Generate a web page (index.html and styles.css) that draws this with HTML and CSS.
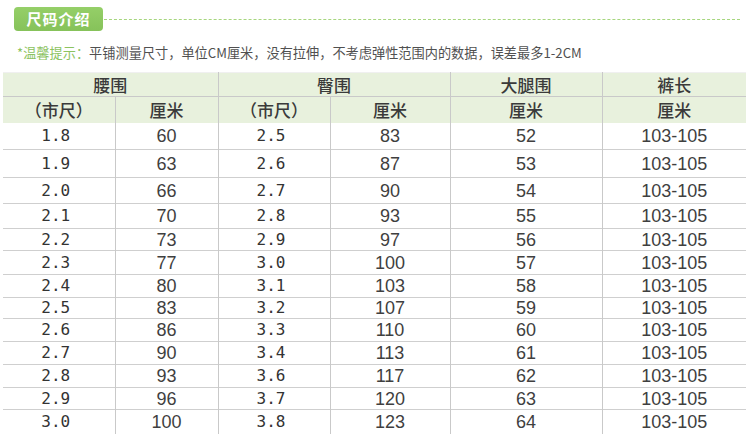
FILE: index.html
```html
<!DOCTYPE html>
<html lang="zh-CN">
<head>
<meta charset="utf-8">
<title>尺码介绍</title>
<link rel="stylesheet" href="styles.css">
</head>
<body>
<div class="page">
  <div class="title-row">
    <div class="badge">尺码介绍</div>
    <div class="dash"></div>
  </div>
  <p class="hint"><span class="hint-key">*温馨提示：</span>平铺测量尺寸，单位CM厘米，没有拉伸，不考虑弹性范围内的数据，误差最多1-2CM</p>
  <table class="size-table">
    <colgroup>
      <col class="c1"><col class="c2"><col class="c3"><col class="c4"><col class="c5"><col class="c6">
    </colgroup>
    <thead>
      <tr class="h1">
        <th colspan="2">腰围</th>
        <th colspan="2" class="sep">臀围</th>
        <th class="sep">大腿围</th>
        <th class="sep">裤长</th>
      </tr>
      <tr class="h2">
        <th>（市尺）</th>
        <th class="sep">厘米</th>
        <th class="sep">（市尺）</th>
        <th class="sep">厘米</th>
        <th class="sep">厘米</th>
        <th class="sep">厘米</th>
      </tr>
    </thead>
    <tbody>
      <tr><td class="mono">1.8</td><td class="sep">60</td><td class="sep mono">2.5</td><td class="sep">83</td><td class="sep">52</td><td class="sep">103-105</td></tr>
      <tr><td class="mono">1.9</td><td class="sep">63</td><td class="sep mono">2.6</td><td class="sep">87</td><td class="sep">53</td><td class="sep">103-105</td></tr>
      <tr><td class="mono">2.0</td><td class="sep">66</td><td class="sep mono">2.7</td><td class="sep">90</td><td class="sep">54</td><td class="sep">103-105</td></tr>
      <tr><td class="mono">2.1</td><td class="sep">70</td><td class="sep mono">2.8</td><td class="sep">93</td><td class="sep">55</td><td class="sep">103-105</td></tr>
      <tr><td class="mono">2.2</td><td class="sep">73</td><td class="sep mono">2.9</td><td class="sep">97</td><td class="sep">56</td><td class="sep">103-105</td></tr>
      <tr><td class="mono">2.3</td><td class="sep">77</td><td class="sep mono">3.0</td><td class="sep">100</td><td class="sep">57</td><td class="sep">103-105</td></tr>
      <tr><td class="mono">2.4</td><td class="sep">80</td><td class="sep mono">3.1</td><td class="sep">103</td><td class="sep">58</td><td class="sep">103-105</td></tr>
      <tr><td class="mono">2.5</td><td class="sep">83</td><td class="sep mono">3.2</td><td class="sep">107</td><td class="sep">59</td><td class="sep">103-105</td></tr>
      <tr><td class="mono">2.6</td><td class="sep">86</td><td class="sep mono">3.3</td><td class="sep">110</td><td class="sep">60</td><td class="sep">103-105</td></tr>
      <tr><td class="mono">2.7</td><td class="sep">90</td><td class="sep mono">3.4</td><td class="sep">113</td><td class="sep">61</td><td class="sep">103-105</td></tr>
      <tr><td class="mono">2.8</td><td class="sep">93</td><td class="sep mono">3.6</td><td class="sep">117</td><td class="sep">62</td><td class="sep">103-105</td></tr>
      <tr><td class="mono">2.9</td><td class="sep">96</td><td class="sep mono">3.7</td><td class="sep">120</td><td class="sep">63</td><td class="sep">103-105</td></tr>
      <tr><td class="mono">3.0</td><td class="sep">100</td><td class="sep mono">3.8</td><td class="sep">123</td><td class="sep">64</td><td class="sep">103-105</td></tr>
    </tbody>
  </table>
</div>
</body>
</html>
```
FILE: styles.css
```css
html, body {
  margin: 0;
  padding: 0;
  background: #ffffff;
}

body {
  font-family: "Noto Sans CJK SC", "Noto Sans", sans-serif;
  color: #444;
}

.page {
  width: 750px;
  height: 434px;
  overflow: hidden;
  padding-top: 7px;
  box-sizing: border-box;
}

.title-row {
  display: flex;
  align-items: center;
  padding-left: 14px;
  padding-right: 10px;
  height: 24px;
}

.badge {
  width: 89px;
  height: 24px;
  border-radius: 4px;
  background: linear-gradient(#95cf68, #86c25a);
  color: #ffffff;
  font-size: 15px;
  font-weight: 700;
  line-height: 24px;
  letter-spacing: 1px;
  text-align: center;
  box-sizing: border-box;
}

.dash {
  flex: 1;
  height: 0;
  border-top: 1px dashed #a6d67e;
  margin-left: 1px;
}

.hint {
  margin: 13px 0 0 17px;
  font-size: 13.2px;
  line-height: 18px;
  color: #505050;
  white-space: nowrap;
}

.hint-key {
  color: #8cc35f;
}

.size-table {
  margin: 10px 0 0 3px;
  width: 743px;
  border-collapse: collapse;
  table-layout: fixed;
  border-top: 1px solid #f0f0f0;
}

.c1 { width: 112px; }
.c2 { width: 103px; }
.c3 { width: 112px; }
.c4 { width: 120px; }
.c5 { width: 152px; }
.c6 { width: 144px; }

.size-table th,
.size-table td {
  padding: 0;
  text-align: center;
  vertical-align: middle;
  color: #3f3f3f;
}

.size-table thead th {
  background: #e8f1dd;
  font-size: 17px;
  font-weight: 500;
  line-height: 20px;
  color: #3a3a3a;
}

.size-table .sep {
  border-left: 1px solid #c9c9c9;
}

.h1 { height: 24px; }
.h1 th { border-bottom: 1px solid #c9c9c9; }
.h2 { height: 26px; }

.size-table td {
  font-family: "Liberation Sans", Arial, sans-serif;
  font-size: 18px;
  line-height: 18px;
  border-top: 1px solid #cfcfcf;
}

.size-table tbody tr:first-child td {
  border-top: none;
}

.size-table td.mono {
  font-family: "DejaVu Sans Mono", monospace;
  font-size: 16px;
  color: #333;
  padding-right: 6px;
}

tbody tr:nth-child(1) { height: 27px; }
tbody tr:nth-child(2) { height: 28px; }
tbody tr:nth-child(3) { height: 26px; }
tbody tr:nth-child(4) { height: 25px; }
tbody tr:nth-child(5) { height: 22px; }
tbody tr:nth-child(6) { height: 24px; }
tbody tr:nth-child(7) { height: 23px; }
tbody tr:nth-child(8) { height: 21px; }
tbody tr:nth-child(9) { height: 23px; }
tbody tr:nth-child(10) { height: 23px; }
tbody tr:nth-child(11) { height: 23px; }
tbody tr:nth-child(12) { height: 22px; }
tbody tr:nth-child(13) { height: 24px; }
```
